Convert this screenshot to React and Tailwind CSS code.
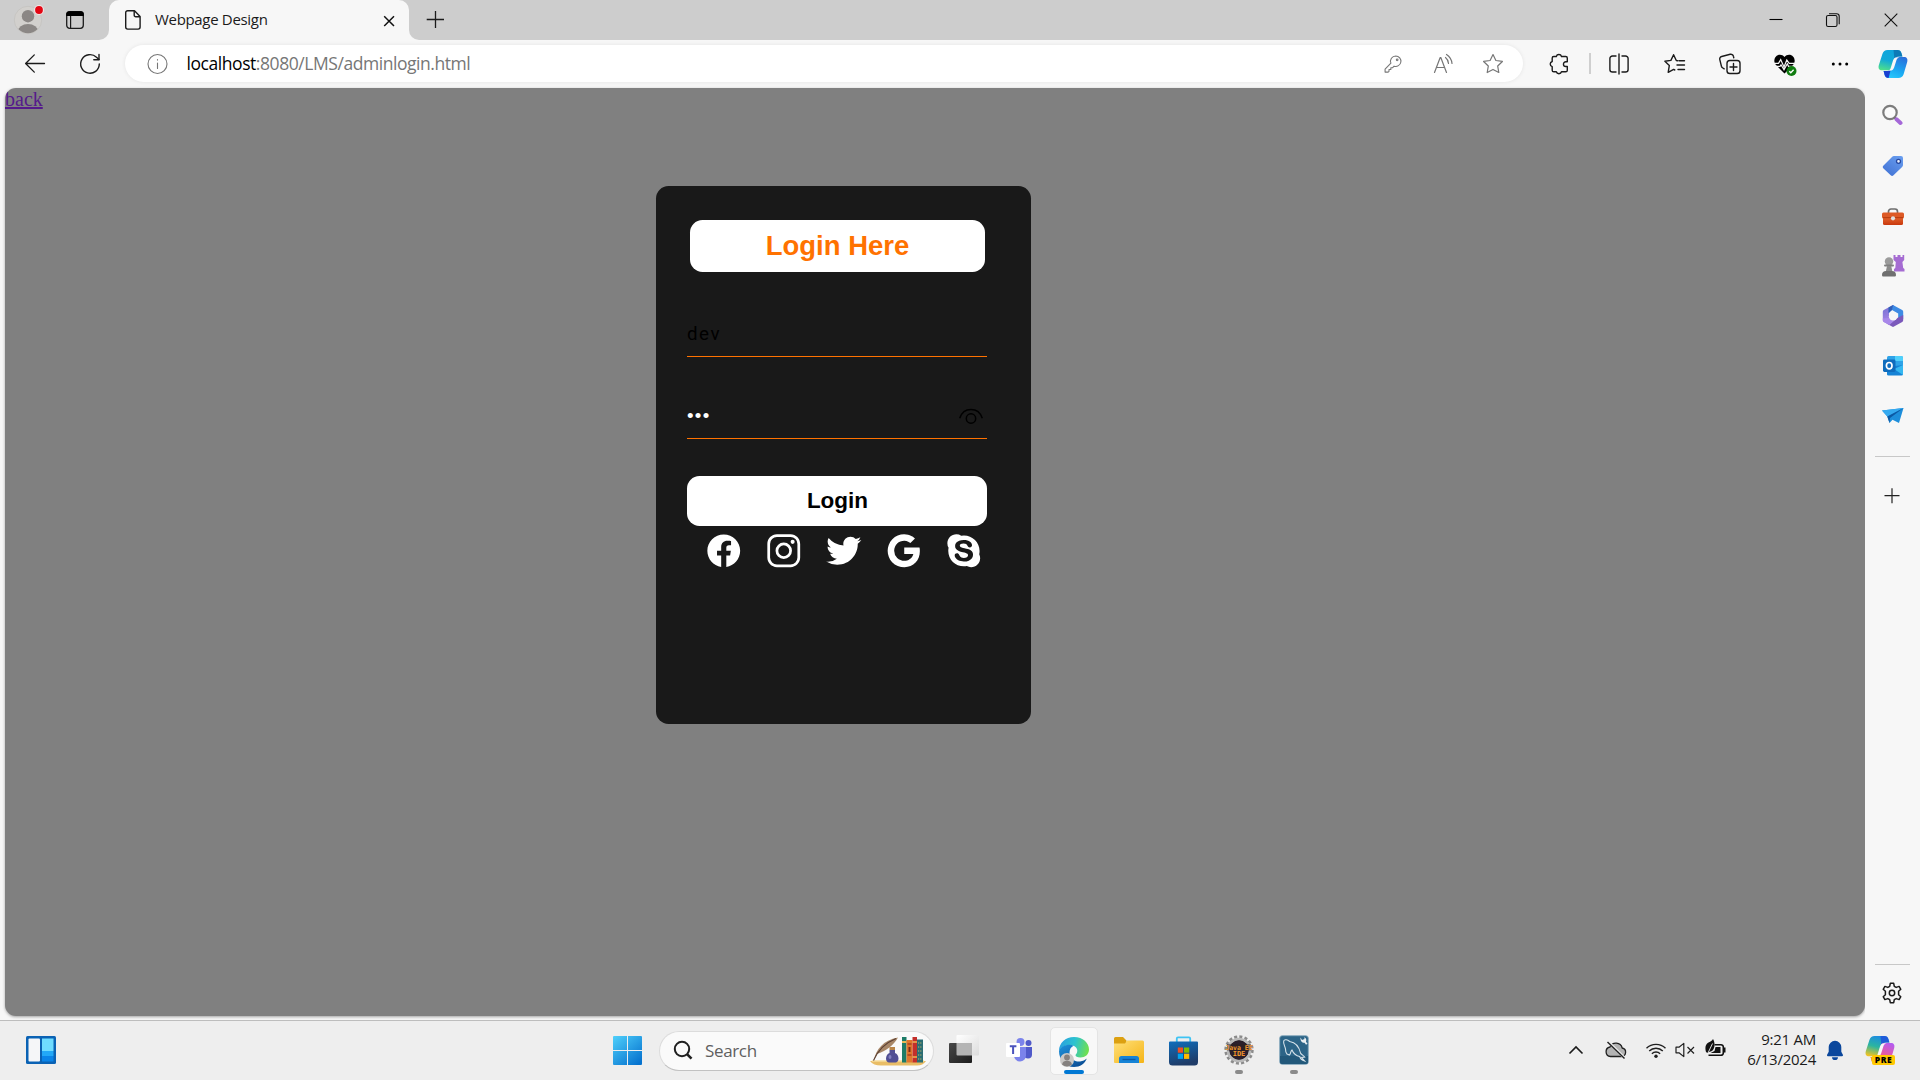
import React from "react";
import {
  IoLogoFacebook,
  IoLogoInstagram,
  IoLogoTwitter,
  IoLogoGoogle,
  IoLogoSkype,
} from "react-icons/io5";

function Line({ size = 24, className = "", sw = 1.3, children }) {
  return (
    <svg
      width={size}
      height={size}
      viewBox="0 0 24 24"
      fill="none"
      stroke="currentColor"
      strokeWidth={sw}
      strokeLinecap="round"
      strokeLinejoin="round"
      className={"shrink-0 " + className}
    >
      {children}
    </svg>
  );
}

function TabStrip() {
  return (
    <div className="flex h-10 bg-[#f7f7f7]">
      <div className="flex w-[109px] items-center rounded-br-[10px] bg-[#cdcdcd] pl-[13px]">
        <svg width="32" height="32" viewBox="0 0 32 32" className="shrink-0">
          <defs>
            <clipPath id="avatar">
              <circle cx="15" cy="16" r="13.2" />
            </clipPath>
          </defs>
          <circle cx="15" cy="16" r="13.7" fill="#d2d0cd" stroke="#bfbdba" strokeWidth="0.6" />
          <circle cx="15" cy="12.2" r="6.2" fill="#8b8785" />
          <ellipse cx="15" cy="27.5" rx="10.2" ry="7.5" fill="#8b8785" clipPath="url(#avatar)" />
          <circle cx="26" cy="6" r="5" fill="#f3e3e3" />
          <circle cx="26" cy="6" r="3.9" fill="#e30613" />
        </svg>
        <svg width="20" height="20" viewBox="0 0 20 20" className="ml-5 shrink-0">
          <rect x="1.7" y="1.7" width="16.6" height="16.6" rx="3" fill="none" stroke="#1b1b1b" strokeWidth="1.3" />
          <path d="M1.2 6V4.4A3.2 3.2 0 0 1 4.4 1.2h11.2a3.2 3.2 0 0 1 3.2 3.2V6z" fill="#000" />
          <path d="M5.6 6v12" stroke="#1b1b1b" strokeWidth="1.2" />
        </svg>
      </div>
      <div className="w-[300px] bg-[#cdcdcd]">
        <div className="flex h-10 items-center rounded-t-[10px] bg-[#f7f7f7] pl-[14px] pr-[12px]">
          <svg width="20" height="22" viewBox="0 0 20 22" fill="none" stroke="#1b1b1b" strokeWidth="1.4" strokeLinejoin="round">
            <path d="M4.7 1.7h6.8l5.6 5.7v10.7a2 2 0 0 1-2 2H4.7a2 2 0 0 1-2-2V3.7a2 2 0 0 1 2-2z" />
            <path d="M11.2 2v4.2a1.6 1.6 0 0 0 1.6 1.6H17" />
          </svg>
          <span className="ml-[12px] flex-1 whitespace-nowrap pb-[2px] font-['Open_Sans',sans-serif] text-[15px] tracking-[-0.32px] text-[#1b1b1b]">
            Webpage Design
          </span>
          <svg width="16" height="16" viewBox="0 0 16 16" stroke="#111" strokeWidth="1.5" className="mt-px">
            <path d="M3.2 3.2l9.8 9.8M13 3.2L3.2 13" />
          </svg>
        </div>
      </div>
      <div className="flex flex-1 items-center rounded-bl-[10px] bg-[#cdcdcd] pl-4 text-[#1b1b1b]">
        <svg width="20" height="20" viewBox="0 0 20 20" stroke="currentColor" strokeWidth="1.3">
          <path d="M1.7 9.5h17.300M10.500 1v17" />
        </svg>
        <div className="flex-1" />
        <svg width="14" height="14" viewBox="0 0 14 14" stroke="#000" strokeWidth="1.1">
          <path d="M0.5 6.500h13" />
        </svg>
        <svg width="16" height="16" viewBox="0 0 16 16" fill="none" stroke="#111" strokeWidth="1.1" className="ml-[42px]">
          <rect x="1.5" y="3.5" width="10.5" height="11" rx="1.6" />
          <path d="M4 1.7h7.6a2.6 2.6 0 0 1 2.6 2.6v8" />
        </svg>
        <svg width="14" height="14" viewBox="0 0 14 14" stroke="#111" strokeWidth="1.1" className="ml-[43px] mr-[22px]">
          <path d="M0.7 0.7l12.6 12.6M13.3 0.7L0.7 13.3" />
        </svg>
      </div>
    </div>
  );
}

function CopilotMark({ id, pre }) {
  return (
    <svg width="30" height="30" viewBox="0 0 30 30" className="shrink-0">
      <defs>
        <linearGradient id={id + "a"} x1="0.5" y1="0" x2="0.2" y2="1">
          <stop offset="0" stopColor={pre ? "#1c8ce0" : "#0fa5dc"} />
          <stop offset="0.5" stopColor={pre ? "#2bb5a0" : "#12a9d8"} />
          <stop offset="1" stopColor={pre ? "#f3c321" : "#4fe08a"} />
        </linearGradient>
        <linearGradient id={id + "b"} x1="0.8" y1="0" x2="0.3" y2="1">
          <stop offset="0" stopColor={pre ? "#b45bf0" : "#2a6fdb"} />
          <stop offset="0.6" stopColor={pre ? "#ee5a96" : "#1aa8f2"} />
          <stop offset="1" stopColor={pre ? "#fa9a4c" : "#28c8fb"} />
        </linearGradient>
      </defs>
      <path d="M9.6 1h10c2 0 3.2 1.2 3.8 3l1 3.4h-3.6c-2.3 0-3.6 1.2-4.3 3.6l-2 7.2c-.6 2-1.600 3-3.600 3H4c-2.800 0-4-2-3.200-5L4.400 4.900C5.300 2.300 7 1 9.600 1z" fill={"url(#" + id + "a)"} />
      <path d="M15.500 1h4.100c2 0 3.200 1.200 3.800 3l1 3.400h-3.600c-2.300 0-3.600 1.200-4.300 3.600z" fill={pre ? "#1f4fd8" : "#0b6fae"} opacity="0.8" />
      <path d="M20.400 29h-10c-2 0-3.200-1.200-3.800-3l-1-4h3.600c2.300 0 3.600-1 4.300-3.400l2-7.400c.6-2 1.600-3.200 3.600-3.200H26c2.800 0 4 2 3.200 5l-3.600 12.200c-.9 2.600-2.600 3.800-5.200 3.800z" fill={"url(#" + id + "b)"} />
      <path d="M5.600 22h3.600c1.700 0 2.900-.6 3.700-2l-2.300 9c-2 .1-3.400-1.200-4-3z" fill={pre ? "#f7a21b" : "#1a3fd0"} />
      <path d="M19.200 8.200h2.400c-2 .3-2.800 1.700-3.400 3.800l-2 6.200c-.7 2.500-2.200 3.500-4.400 3.500h-2c2-.3 2.600-1.700 3.200-3.800l2-6.300c.7-2.300 2-3.400 4.200-3.400z" fill="#f7f7f7" />
    </svg>
  );
}

const star = "M12 2.600l2.900 5.900 6.500.95-4.700 4.600 1.100 6.450L12 17.450 6.200 20.500l1.100-6.450-4.700-4.600 6.500-.95z";

function Toolbar() {
  return (
    <div className="flex h-12 items-center bg-[#f7f7f7] pb-px text-[#1b1b1b]">
      <Line className="ml-[23px]">
        <path d="M21.500 11.500H2.700M11.300 2.900L2.600 11.500l8.700 8.600" />
      </Line>
      <Line className="ml-[31px]" sw={1.4}>
        <path d="M21.300 12a9.300 9.300 0 1 1-2.800-6.700L21 7.600" />
        <path d="M21 2.500v5.200h-5.200" />
      </Line>
      <div className="ml-[23px] flex h-[37px] w-[1398px] items-center rounded-full bg-white pl-[21px] pr-[18px] text-[#767676] shadow-[0_0_4px_rgba(0,0,0,0.08)]">
        <Line sw={1.1}>
          <circle cx="11.500" cy="12" r="9.500" />
          <path d="M11.500 11v5.500M11.500 7.500v.6" />
        </Line>
        <span className="ml-[16.500px] flex-1 whitespace-nowrap pb-px font-['Open_Sans',sans-serif] text-[17.500px] tracking-[-0.440px]">
          <span className="text-black">localhost</span>:8080/LMS/adminlogin.html
        </span>
        <Line size={20} className="mr-[2px]" sw={1.3}>
          <path d="M15.300 2.300a6.300 6.300 0 1 1-2 12.300l-1.700 1.800H9.400v2.200H7.200v2.200l-1 .9H2.500v-3.600l7-7.100a6.300 6.300 0 0 1 5.800-8.700z" />
          <circle cx="17" cy="7" r="1" />
        </Line>
        <Line className="ml-[27px]" sw={1.200}>
          <path d="M2.500 20.500L8.200 5.500h.6l5.700 15M4.500 15.500h8M13.500 5.500a8 8 0 0 1 3 6M14.500 2.500a12 12 0 0 1 5.500 9" />
        </Line>
        <Line className="ml-[25px]" sw={1.200}>
          <path d={star} />
        </Line>
      </div>
      <Line className="ml-[24px]" sw={1.400}>
        <path d="M9.300 4.500a2.700 2.700 0 0 1 5.200 0h4.200a1.600 1.600 0 0 1 1.600 1.600v3.700h-1.500a2.300 2.300 0 0 0 0 4.700h1.500v3.700a1.600 1.600 0 0 1-1.600 1.600h-4.200a2.700 2.700 0 0 1-5.200 0H6.800a1.600 1.600 0 0 1-1.600-1.600v-3.500a2.700 2.700 0 0 1 0-5.200V6.100a1.600 1.600 0 0 1 1.600-1.600z" />
      </Line>
      <div className="ml-[18px] h-[21px] w-[2px] bg-[#cfcfcf]" />
      <Line className="ml-[16px]" sw={1.400}>
        <path d="M9 4H5.500a2.600 2.600 0 0 0-2.600 2.600v10.800A2.600 2.600 0 0 0 5.500 20H9M15 4h3.500a2.600 2.600 0 0 1 2.600 2.600v10.800a2.600 2.600 0 0 1-2.600 2.600H15M12 2v20" />
      </Line>
      <Line className="ml-[32px]" sw={1.400}>
        <path d="M14.600 8.700l-1.300-.2L10.600 2.700 7.900 8.400l-6 .9 4.400 4.300-1.100 6.800 5.400-3 1.200.6M16 8.700h5.500M14 13h7.500M15 17.500h6.500" />
      </Line>
      <Line className="ml-[31px]" sw={1.400}>
        <rect x="9" y="8.500" width="13" height="13" rx="2.800" />
        <path d="M15.500 11.500v7M12 15h7M6.200 16.800L4.800 16a3 3 0 0 1-1.400-1.800L1.800 7.700A2.600 2.600 0 0 1 3.700 4.500l8.500-2.200a2.600 2.600 0 0 1 3.200 1.900l.4 1.500" />
      </Line>
      <svg width="24" height="24" viewBox="0 0 24 24" className="ml-[31px] shrink-0">
        <path d="M11.500 21.500L3 13C.6 10.400 1 6.800 2.800 4.700 5.200 2 9.200 2.200 11.500 5c2.300-2.800 6.300-3 8.700-.3 1.800 2.100 2.200 5.700-.2 8.300z" fill="#000" />
        <path d="M0 11.300h5.500l2.200-3.700 3.300 7.400 2.800-7 2.400 3.300h6M3 14.300h4l1-1.500 3 5 3.300-6 1.200 2.500h4" fill="none" stroke="#f7f7f7" strokeWidth="1.200" />
        <circle cx="18.500" cy="19" r="5" fill="#107c10" />
        <path d="M16.300 19.200l1.500 1.500 2.800-3" fill="none" stroke="#fff" strokeWidth="1.300" />
      </svg>
      <svg width="24" height="24" viewBox="0 0 24 24" className="ml-[31px] shrink-0">
        <circle cx="5.300" cy="12" r="1.500" />
        <circle cx="12" cy="12" r="1.500" />
        <circle cx="18.700" cy="12" r="1.500" />
      </svg>
      <div className="ml-[26px]">
        <CopilotMark id="cp" />
      </div>
    </div>
  );
}

function Sidebar() {
  return (
    <div className="flex w-[55px] flex-col items-center bg-[#f7f7f7] pt-[16px]">
      <svg width="22" height="22" viewBox="0 0 22 22" className="mr-px">
        <circle cx="9" cy="8.500" r="6.700" fill="#fafafa" stroke="#7c7c7c" strokeWidth="2.200" />
        <path d="M13.500 13.500l2 2" stroke="#6d6d6d" strokeWidth="2" />
        <path d="M15.500 15.300l4 3.700" stroke="#a568d8" strokeWidth="4" strokeLinecap="round" />
      </svg>
      <svg width="22" height="22" viewBox="0 0 22 22" className="mt-[29px]">
        <defs>
          <linearGradient id="tag" x1="1" y1="0" x2="0.300" y2="1">
            <stop offset="0" stopColor="#6a9ff0" />
            <stop offset="1" stopColor="#4475d6" />
          </linearGradient>
        </defs>
        <path d="M12 1h7a2 2 0 0 1 2 2v7c0 .8-.3 1.500-.9 2L11.500 20.300a2 2 0 0 1-2.800 0L1.500 13.500a2 2 0 0 1 0-2.900L10 1.900c.5-.6 1.200-.9 2-.9z" fill="url(#tag)" />
        <circle cx="16.500" cy="6.300" r="2" fill="#e9f0fd" stroke="#2748a0" strokeWidth="1.300" />
      </svg>
      <svg width="24" height="20" viewBox="0 0 24 20" className="mt-[30px]">
        <defs>
          <linearGradient id="box" x1="0" y1="0" x2="0" y2="1">
            <stop offset="0" stopColor="#e0602a" />
            <stop offset="1" stopColor="#c9380d" />
          </linearGradient>
        </defs>
        <path d="M7.500 6V4.500A2.500 2.500 0 0 1 10 2h4a2.500 2.500 0 0 1 2.500 2.500V6" fill="none" stroke="#6d6d6d" strokeWidth="1.700" />
        <rect x="1" y="5.500" width="22" height="6" rx="1.500" fill="#dd5a26" />
        <path d="M2 11h20v5.500a1.500 1.500 0 0 1-1.500 1.500h-17A1.500 1.500 0 0 1 2 16.500z" fill="url(#box)" />
        <path d="M2 10.700h20" stroke="#a82f08" strokeWidth="0.800" />
        <circle cx="12" cy="11.300" r="2.100" fill="#e0e0e0" />
      </svg>
      <svg width="24" height="24" viewBox="0 0 24 24" className="mt-[27px]">
        <path d="M12.500 1h2v2h2V1h3v2h2V1h1.700v5l-1.800 2 .8 6 1.300 1v2.500H13V15l1.300-1 .5-6-2.300-2z" fill="#a56cd2" />
        <circle cx="8" cy="7.500" r="4.200" fill="#9b9b9b" />
        <rect x="3" y="10.500" width="10" height="2" rx="1" fill="#808080" />
        <path d="M6 12h4.200l1.200 5.500H4.800z" fill="#8b8b8b" />
        <path d="M1 21c0-2.500 1.500-4 4-4h6c2.500 0 4 1.500 4 4 0 1-.7 1.500-1.500 1.500h-11C1.600 22.500 1 22 1 21z" fill="#707070" />
      </svg>
      <svg width="24" height="24" viewBox="0 0 24 24" className="mt-[26px]">
        <defs>
          <linearGradient id="m1" x1="0" y1="0" x2="0.300" y2="1">
            <stop offset="0" stopColor="#6f6fd0" />
            <stop offset="1" stopColor="#ad86e8" />
          </linearGradient>
        </defs>
        <path d="M12 1L2.800 6a2 2 0 0 0-1 1.800v8.400a2 2 0 0 0 1 1.700l5 2.700 3.200-5.400-3-2V9l5-8z" fill="url(#m1)" />
        <path d="M12 1l9.200 5a2 2 0 0 1 1 1.800V15l-5-1V9.500L11 6 7.500 9z" fill="#3e8be4" />
        <path d="M12 1L7.500 3.500 7.500 9 11 6z" fill="#2f5fb8" />
        <path d="M22.200 11v5.200a2 2 0 0 1-1 1.700l-8.200 4.700a2 2 0 0 1-2 0l-5.500-3.200 11.700-5.900z" fill="#7b59bb" />
        <path d="M1.800 14.500v1.700a2 2 0 0 0 1 1.700l5.500 3 8.900-7.400-5.200 2.900-4-2.300z" fill="#a988ea" />
        <circle cx="12.200" cy="12.200" r="4.300" fill="#f7f7f7" />
      </svg>
      <svg width="22" height="22" viewBox="0 0 22 22" className="mt-[27px]">
        <rect x="5" y="1" width="16" height="19" rx="1.500" fill="#2ea3e8" />
        <path d="M13 1h6.500A1.500 1.500 0 0 1 21 2.500V6h-8z" fill="#4fd0fb" />
        <path d="M5 12l16-2v9a1.500 1.500 0 0 1-1.500 1.500h-13A1.500 1.500 0 0 1 5 19z" fill="#1683d6" />
        <path d="M21 10v10L12 14z" fill="#35b8f1" />
        <rect x="1" y="4.500" width="12.500" height="12.500" rx="1.400" fill="#0f6cbd" />
        <ellipse cx="7.200" cy="10.700" rx="2.800" ry="3.200" fill="none" stroke="#fff" strokeWidth="1.700" />
      </svg>
      <svg width="24" height="18" viewBox="0 0 24 18" className="mt-[30px]">
        <path d="M1 3.500L22.500 1 18 16l-6.500-3.300L8.500 16 6.300 9.600z" fill="#1d8edb" />
        <path d="M1 3.500L22.500 1 6.300 9.600z" fill="#35aaf0" />
        <path d="M6.300 9.600L22.500 1 9 11l-.5 5z" fill="#0c59a4" />
      </svg>
      <div className="mt-[31px] h-px w-[35px] bg-[#c8c8c8]" />
      <svg width="18" height="18" viewBox="0 0 18 18" stroke="#222" strokeWidth="1.200" className="mr-px mt-[30px]">
        <path d="M1.500 8.700h15M9 1.200v15" />
      </svg>
      <div className="flex-1" />
      <div className="h-px w-[35px] bg-[#c8c8c8]" />
      <svg width="24" height="24" viewBox="0 0 24 24" fill="none" stroke="#1b1b1b" strokeWidth="1.500" strokeLinejoin="round" className="mb-[15px] mr-px mt-[16px]">
        <circle cx="12" cy="12" r="2.700" />
        <path d="M10.300 2.300h3.400l.6 3 1.900 1.100 2.900-1 1.700 2.900-2.200 2v3.400l2.200 2-1.700 2.900-2.900-1-1.900 1.100-.6 3h-3.400l-.6-3-1.900-1.100-2.900 1-1.700-2.900 2.200-2v-3.400l-2.200-2 1.700-2.900 2.900 1 1.900-1.100z" />
      </svg>
    </div>
  );
}

function LoginCard() {
  const social = [IoLogoFacebook, IoLogoInstagram, IoLogoTwitter, IoLogoGoogle, IoLogoSkype];
  return (
    <div className="ml-[651px] mt-[75px] h-[538px] w-[375px] rounded-[12.500px] bg-[#191919] px-[31px] pt-[34px] font-['Liberation_Sans',sans-serif]">
      <h2 className="ml-[3px] h-[52px] w-[295px] rounded-[12.500px] bg-white text-center text-[27.500px] font-bold leading-[51px] text-[#ff7200]">
        Login Here
      </h2>
      <div className="mt-[41px] h-[44px] w-[300px] border-b border-[#ff7200]">
        <input
          defaultValue="dev"
          className="block h-[41px] w-full bg-transparent font-['Roboto',sans-serif] text-[18.750px] font-normal tracking-[1.500px] text-black outline-none"
        />
      </div>
      <div className="mt-[38px] flex h-[44px] w-[300px] items-center border-b border-[#ff7200]">
        <input
          type="password"
          defaultValue="dev"
          className="mb-[2px] h-[41px] w-[260px] bg-transparent text-[18.750px] tracking-[1.250px] text-white outline-none"
        />
        <svg width="26" height="20" viewBox="0 0 26 20" fill="none" stroke="#000" strokeWidth="1.500" className="ml-[11px]">
          <path d="M1.700 11.200C3.500 5.600 8 2.400 13 2.400s9.500 3.200 11.300 8.800" />
          <circle cx="13" cy="11.500" r="4.700" />
        </svg>
      </div>
      <button className="mt-[37px] block h-[50px] w-[300px] rounded-[12.500px] bg-white pl-px text-center text-[22.500px] font-bold leading-[48px] text-black">
        Login
      </button>
      <div className="mt-[6px] flex gap-[22.500px] pl-[18px] text-[37.500px] text-white">
        {social.map((Icon, i) => (
          <Icon key={i} />
        ))}
      </div>
    </div>
  );
}

function SearchArt() {
  return (
    <svg width="58" height="30" viewBox="0 0 58 30">
      <path d="M1 25h56c-2 3-5 4.500-9 4.500H12C7 29.500 3 28 1 25z" fill="#e9bd66" />
      <path d="M3 25h52" stroke="#f6dc9b" strokeWidth="1.500" />
      <path d="M5 23.500C7 14 14 4 29 1.500 25 9 17 15 8 18z" fill="#a88768" />
      <path d="M4.500 24.500C9 14 16 7 27 2.500" fill="none" stroke="#5b4034" strokeWidth="1.200" />
      <rect x="20.500" y="11" width="5.500" height="3" fill="#b98548" />
      <path d="M20.500 14h5.500v3c2 .8 3.500 3 3.500 5.500s-1.500 4-3 4h-6.500c-1.500 0-3-1.500-3-4s1.500-4.700 3.500-5.500z" fill="#514f94" />
      <ellipse cx="21" cy="21" rx="1.500" ry="2" fill="#8280c0" />
      <rect x="33" y="1" width="4.500" height="25.500" fill="#1d7c68" />
      <rect x="33" y="5" width="4.500" height="2" fill="#e7b954" />
      <rect x="37.500" y="4" width="6" height="22.500" fill="#e0762c" />
      <path d="M38.500 8h4M38.500 19h4" stroke="#8b2a18" strokeWidth="1.200" />
      <path d="M40.500 11v5" stroke="#7a2a18" strokeWidth="2" />
      <rect x="43.500" y="1" width="4.500" height="25.500" fill="#c3302b" />
      <path d="M43.500 6H48M43.500 21H48" stroke="#f0b453" strokeWidth="1.400" />
      <rect x="48" y="3.500" width="6" height="23" fill="#2c6e74" />
      <path d="M49 7h4M49 11h4M49 15h4M49 19h4M49 23h4" stroke="#c6b36a" strokeDasharray="1.200 1" strokeWidth="1.200" />
    </svg>
  );
}

function Taskbar() {
  return (
    <div className="flex h-[60px] items-center border-t border-[#bdbdbd] bg-[#eeeeee]">
      <svg width="30" height="28" viewBox="0 0 30 28" className="mb-px ml-[26px] shrink-0">
        <rect width="30" height="28" rx="1.500" fill="#0a62b4" />
        <rect x="2.500" y="2.500" width="11.500" height="23" rx="1" fill="#f5f6f8" />
        <path d="M16 2.500h11.500V15H16z" fill="#6fdcff" />
        <path d="M16 15h11.500v5H16z" fill="#22a8f7" />
        <path d="M16 20h11.500v5.500H16z" fill="#0a84e8" />
      </svg>
      <svg width="29" height="29" viewBox="0 0 29 29" className="ml-[557px] shrink-0">
        <defs>
          <linearGradient id="win" gradientUnits="userSpaceOnUse" x1="0" y1="0" x2="24" y2="29">
            <stop offset="0" stopColor="#4fd0fb" />
            <stop offset="1" stopColor="#0673cf" />
          </linearGradient>
        </defs>
        <path d="M0 1a1 1 0 0 1 1-1h13v14H0zM15 0h13a1 1 0 0 1 1 1v13H15zM0 15h14v14H1a1 1 0 0 1-1-1zM15 15h14v13a1 1 0 0 1-1 1H15z" fill="url(#win)" />
      </svg>
      <div className="ml-[17px] flex h-[40px] w-[275px] shrink-0 items-center rounded-full border border-[#dcdcdc] border-b-[#c2c2c2] bg-[#fafafa] pl-[13px]">
        <svg width="22" height="22" viewBox="0 0 22 22" fill="none" stroke="#1f1f1f" strokeWidth="2">
          <circle cx="9" cy="9" r="7.200" />
          <path d="M14 14.200l4.500 4.500" strokeWidth="2.600" />
        </svg>
        <span className="ml-[10px] font-['Open_Sans',sans-serif] text-[17px] tracking-[-0.350px] text-[#5f5f5f]">Search</span>
        <div className="ml-auto mr-[6px] mt-px">
          <SearchArt />
        </div>
      </div>
      <svg width="30" height="29" viewBox="0 0 30 29" className="mb-[2px] ml-[15px] shrink-0">
        <defs>
          <linearGradient id="tv" x1="0" y1="0" x2="1" y2="1">
            <stop offset="0" stopColor="#484848" />
            <stop offset="1" stopColor="#1c1c1c" />
          </linearGradient>
          <linearGradient id="tw" x1="0" y1="0" x2="1" y2="1">
            <stop offset="0" stopColor="#ffffff" />
            <stop offset="1" stopColor="#dcdcdc" />
          </linearGradient>
        </defs>
        <rect y="8" width="23" height="20" rx="1" fill="url(#tv)" />
        <path d="M8.500 0H29a1 1 0 0 1 1 1v18.500a1 1 0 0 1-1 1h-6V8H7.500V1a1 1 0 0 1 1-1z" fill="url(#tw)" />
        <path d="M7.500 8H23v12.500H8.500a1 1 0 0 1-1-1z" fill="#b4b4b4" />
      </svg>
      <svg width="28" height="26" viewBox="0 0 28 26" className="mb-px ml-[26px] shrink-0">
        <circle cx="15.500" cy="5" r="4" fill="#7b83eb" />
        <circle cx="23.500" cy="6" r="3" fill="#5059c9" />
        <path d="M19 10h8v7.500a4 4 0 0 1-4 4c-2 0-4-1-4-3z" fill="#5059c9" />
        <path d="M9 10h12v8.500a6 6 0 0 1-12 0z" fill="#7b83eb" />
        <rect x="1" y="6" width="14" height="14" rx="1" fill="#fff" />
        <path d="M4.800 9.300h6.600M8.100 9.300v7.700" stroke="#4b53bc" strokeWidth="2" />
      </svg>
      <div className="ml-[17px] flex h-[48px] w-[48px] shrink-0 flex-col items-center rounded-[5px] border border-[#e4e4e4] bg-[#f8f8f8] pt-[7px]">
        <svg width="32" height="32" viewBox="0 0 32 32">
          <defs>
            <linearGradient id="e1" x1="0" y1="0.300" x2="1" y2="0.500">
              <stop offset="0" stopColor="#2a9fe0" />
              <stop offset="0.500" stopColor="#2cc3cf" />
              <stop offset="1" stopColor="#6fe04f" />
            </linearGradient>
            <linearGradient id="e2" x1="0" y1="0" x2="0.700" y2="1">
              <stop offset="0" stopColor="#1d93dd" />
              <stop offset="1" stopColor="#0c4f96" />
            </linearGradient>
          </defs>
          <path d="M1 16C1 8 7.500 2 16 2c9 0 15 6 15 12.500 0 5-4 8-8.500 8-3.500 0-5-1.200-5-2.300 0-1 1.800-1.700 1.800-4.500 0-3.200-3.300-5.700-7.300-5.700-5 0-9 2.500-11 6z" fill="url(#e1)" />
          <path d="M1 16c1-3.500 5.500-6.200 10.500-6.200 1.500 0 3 .3 4.200 1-3 1.200-4.200 4-4.200 7.200 0 6 5.500 9 10.500 8.500 3-.3 5-1.500 6.800-3C27 28.500 22 32 16 32 7.500 32 1 25 1 16z" fill="url(#e2)" />
          <circle cx="9" cy="25" r="7" fill="#cbc9c7" />
          <circle cx="9" cy="22.500" r="2.900" fill="#85817f" />
          <path d="M4 29.500c.5-3 2.500-3.800 5-3.800s4.500.8 5 3.800c-3 2.500-7 2.500-10 0z" fill="#85817f" />
        </svg>
        <div className="mt-[3px] h-[4px] w-[20px] shrink-0 rounded-full bg-[#0078d4]" />
      </div>
      <svg width="30" height="28" viewBox="0 0 30 28" className="mb-px ml-[16px] shrink-0">
        <defs>
          <linearGradient id="fold" x1="0" y1="0" x2="1" y2="1">
            <stop offset="0" stopColor="#ffe07a" />
            <stop offset="1" stopColor="#f5b416" />
          </linearGradient>
        </defs>
        <path d="M0 2.500A1.500 1.500 0 0 1 1.500 1H9l3.500 3.500V9H0z" fill="#dca011" />
        <path d="M0 7.500h11l2-3h15.500A1.500 1.500 0 0 1 30 6v20a1 1 0 0 1-1 1H1a1 1 0 0 1-1-1z" fill="url(#fold)" />
        <path d="M5 27v-4.500A2.500 2.500 0 0 1 7.500 20h15a2.500 2.500 0 0 1 2.500 2.500V27z" fill="#1683d6" />
        <path d="M8.500 23.500h13" stroke="#0c59a4" strokeWidth="1.300" />
      </svg>
      <svg width="29" height="30" viewBox="0 0 29 30" className="ml-[25px] shrink-0">
        <defs>
          <linearGradient id="store" x1="0" y1="0" x2="0.300" y2="1">
            <stop offset="0" stopColor="#0f6ebd" />
            <stop offset="1" stopColor="#1f3c68" />
          </linearGradient>
        </defs>
        <path d="M7.800 6V2.500a1.200 1.200 0 0 1 1.200-1.200h11a1.200 1.200 0 0 1 1.200 1.200V6" fill="none" stroke="#3ec3f3" strokeWidth="1.800" />
        <path d="M0 6.500A1 1 0 0 1 1 5.500h27a1 1 0 0 1 1 1V26a3.500 3.500 0 0 1-3.500 3.500h-22A3.500 3.500 0 0 1 0 26z" fill="url(#store)" />
        <path d="M8.800 11.500h5.200v5.200H8.800z" fill="#f25022" />
        <path d="M15 11.500h5.200v5.200H15z" fill="#7fba00" />
        <path d="M8.800 17.700h5.200v5.200H8.800z" fill="#00a4ef" />
        <path d="M15 17.700h5.200v5.200H15z" fill="#ffb900" />
      </svg>
      <div className="ml-[25px] flex w-[32px] shrink-0 flex-col items-center pt-[7px]">
        <svg width="32" height="32" viewBox="0 0 32 32">
          <circle cx="16" cy="16" r="13.300" fill="none" stroke="#8b8b8b" strokeWidth="2.800" strokeDasharray="3 2.220" />
          <circle cx="16" cy="16" r="11" fill="#2a2028" stroke="#b9b9b9" strokeWidth="2.600" />
          <circle cx="16" cy="16" r="9.500" fill="#2b1f2b" />
          <rect x="4" y="10" width="24" height="6.500" fill="#2b1f20" opacity="0.500" />
          <text x="16" y="15.500" textAnchor="middle" fontSize="6.500" fontWeight="bold" fontFamily="DejaVu Sans Mono, monospace" fill="#f0952c">Java EE</text>
          <text x="16" y="22" textAnchor="middle" fontSize="7" fontWeight="bold" fontFamily="DejaVu Sans Mono, monospace" fill="#f0952c">IDE</text>
        </svg>
        <div className="mt-[4px] h-[4px] w-[8px] rounded-full bg-[#8a8a8a]" />
      </div>
      <div className="ml-[23px] flex w-[32px] shrink-0 flex-col items-center pt-[7px]">
        <svg width="32" height="32" viewBox="0 0 32 32">
          <rect x="1.700" y="1.700" width="28.600" height="28.600" rx="2.500" fill="#2c6487" stroke="#87a9bd" strokeWidth="0.900" />
          <path d="M2 22h28v6a2 2 0 0 1-2 2H4a2 2 0 0 1-2-2z" fill="#22587a" />
          <path d="M9 20c-1-1-1.500-3-1.500-5C7 12 5 10 5.700 7c.8-2.300 4-1 6 .5 6 .8 9.500 5.500 11 12 1.800 1.600 3.300 2.500 4 3.500l-3 .5 3 3.500c-3-1-4.500-2.500-5-4.500-5-1-6.500-3.500-7.700-6.500-1.500 1-1 3-2.500 5z" fill="none" stroke="#d5e2ea" strokeWidth="1.100" />
          <path d="M22.500 3.500l1.500 2.500 2.500-1-.3-1.700c2 .9 2.500 2.600 1.800 4.400l1.500 2-1.500 1-1.500-2c-2 .3-4.400-1.400-4-5.200z" fill="#e8eef2" />
        </svg>
        <div className="mt-[4px] h-[4px] w-[8px] rounded-full bg-[#8a8a8a]" />
      </div>
      <div className="flex-1" />
      <svg width="16" height="12" viewBox="0 0 16 12" fill="none" stroke="#1b1b1b" strokeWidth="1.600" className="mb-[2px] shrink-0">
        <path d="M1.500 9.500L8 3l6.500 6.500" />
      </svg>
      <svg width="24" height="20" viewBox="0 0 24 20" className="mb-px ml-[20px] shrink-0" fill="none" stroke="#1f1f1f" strokeWidth="1.300">
        <path d="M6.500 16.500h11a4.300 4.300 0 0 0 .7-8.500A6.500 6.500 0 0 0 6 7a4.800 4.800 0 0 0 .5 9.500z" fill="#b3b3b3" />
        <path d="M4 1.500l17 17" stroke="#eee" strokeWidth="2.600" />
        <path d="M3.500 2l17 16.500" strokeWidth="1.400" />
      </svg>
      <svg width="22" height="18" viewBox="0 0 22 18" className="mb-px ml-[17px] shrink-0" fill="none" stroke="#1f1f1f" strokeWidth="1.400">
        <path d="M1.500 7.300a13.500 13.500 0 0 1 19 0M4.200 10a9.600 9.600 0 0 1 13.600 0M6.900 12.700a5.800 5.800 0 0 1 8.200 0" />
        <circle cx="11" cy="15.200" r="1.700" fill="#1f1f1f" stroke="none" />
      </svg>
      <svg width="22" height="18" viewBox="0 0 22 18" className="mb-px ml-[7px] shrink-0" fill="none" stroke="#1f1f1f" strokeWidth="1.200">
        <path d="M2 6.200h3L9.800 2.400v13.200L5 11.800H2z" strokeLinejoin="round" />
        <path d="M13.500 6l6.500 6.500M20 6l-6.500 6.500" />
      </svg>
      <svg width="22" height="20" viewBox="0 0 22 20" className="mb-[3px] ml-[9px] shrink-0">
        <path d="M9.500 5.700H16A2.300 2.300 0 0 1 18.300 8v6a2.300 2.300 0 0 1-2.300 2.300H3.500" fill="none" stroke="#111" strokeWidth="1.600" />
        <path d="M10.500 8H15.500v6H5.500l4-2z" fill="#111" />
        <path d="M18.500 8.500h2v5h-2z" fill="#111" />
        <path d="M8 0c2 3.500 2.200 8.300-.2 11.200C6 13 3.700 12.600 2.500 14L1 13C0 9 0 5.300 4 3.300 5.500 2.500 7 2 8 0z" fill="#111" />
        <path d="M7.500 4.500L2.500 15" stroke="#eee" strokeWidth="0.900" />
      </svg>
      <div className="ml-[17px] w-[72px] shrink-0 whitespace-nowrap pb-[3px] text-right font-['Open_Sans',sans-serif] text-[15px] leading-[20px] tracking-[-0.250px] text-[#1b1b1b]">
        <div>9:21 AM</div>
        <div>6/13/2024</div>
      </div>
      <svg width="18" height="20" viewBox="0 0 18 20" className="mb-px ml-[10px] shrink-0">
        <path d="M9 .8a6.300 6.300 0 0 1 6.300 6.300v4.700l1.600 3c.3.700-.1 1.400-.8 1.400H1.900c-.7 0-1.100-.7-.8-1.400l1.600-3V7.100A6.300 6.300 0 0 1 9 .8zM6 17.200h6a3 3 0 0 1-6 0z" fill="#0b479c" />
      </svg>
      <div className="relative mb-px ml-[21px] mr-[25px] h-[30px] w-[30px] shrink-0">
        <CopilotMark id="cq" pre />
        <div className="absolute bottom-0 left-[7px] h-[10px] w-[23px] rounded-[2px] bg-[#ffc800] text-center font-['Open_Sans',sans-serif] text-[8.500px] font-extrabold leading-[10px] tracking-[0.500px] text-black">
          PRE
        </div>
      </div>
    </div>
  );
}

export default function App() {
  return (
    <div className="flex h-[1080px] w-[1920px] flex-col overflow-hidden bg-[#f7f7f7]">
      <TabStrip />
      <Toolbar />
      <div className="flex h-[932px] pl-[5px]">
        <main className="h-[928px] flex-1 overflow-hidden rounded-[11px] bg-[#808080] shadow-[0_1px_3px_rgba(0,0,0,0.350)]">
          <a href="#back" className="block w-fit font-['Liberation_Serif',serif] text-[20px] leading-[23px] text-[#551a8b] underline">
            back
          </a>
          <LoginCard />
        </main>
        <Sidebar />
      </div>
      <Taskbar />
    </div>
  );
}
